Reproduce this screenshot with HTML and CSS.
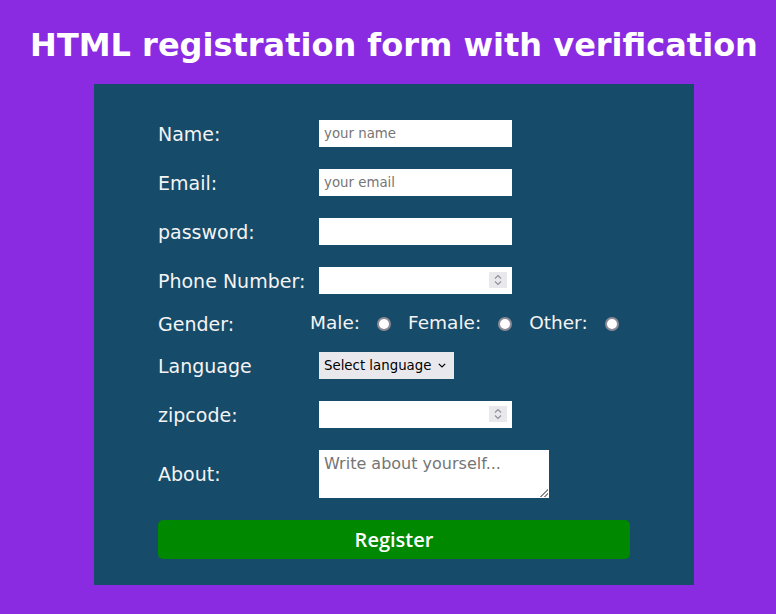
FILE: index.html
```html
<!DOCTYPE html>
<html lang="en">
<head>
<meta charset="utf-8">
<title>HTML registration form with verification</title>
<link rel="stylesheet" href="styles.css">
</head>
<body>
<div class="page">
  <h1 class="title">HTML registration form with verification</h1>
  <form class="panel" onsubmit="return false">
    <div class="row">
      <label class="label" for="name">Name:</label>
      <input class="field" id="name" type="text" placeholder="your name">
    </div>
    <div class="row">
      <label class="label" for="email">Email:</label>
      <input class="field" id="email" type="text" placeholder="your email">
    </div>
    <div class="row">
      <label class="label" for="pw">password:</label>
      <input class="field" id="pw" type="password">
    </div>
    <div class="row">
      <label class="label" for="phone">Phone Number:</label>
      <div class="numbox">
        <input class="numfield" id="phone" type="text" inputmode="numeric">
        <span class="spin"><svg width="10" height="14" viewBox="0 0 10 14"><path d="M2 5.5 L5 2.5 L8 5.5 M2 8.5 L5 11.5 L8 8.5" fill="none" stroke="#8e8e98" stroke-width="1.1"/></svg></span>
      </div>
    </div>
    <div class="row gender">
      <span class="label glabel">Gender:</span>
      <label class="opt">Male:<input class="radio" type="radio" name="g"></label>
      <label class="opt">Female:<input class="radio" type="radio" name="g"></label>
      <label class="opt">Other:<input class="radio" type="radio" name="g"></label>
    </div>
    <div class="row lang">
      <label class="label" for="lang">Language</label>
      <select class="select" id="lang">
        <option>Select language</option>
        <option>English</option>
        <option>Hindi</option>
      </select>
    </div>
    <div class="row">
      <label class="label" for="zip">zipcode:</label>
      <div class="numbox">
        <input class="numfield" id="zip" type="text" inputmode="numeric">
        <span class="spin"><svg width="10" height="14" viewBox="0 0 10 14"><path d="M2 5.5 L5 2.5 L8 5.5 M2 8.5 L5 11.5 L8 8.5" fill="none" stroke="#8e8e98" stroke-width="1.1"/></svg></span>
      </div>
    </div>
    <div class="row">
      <label class="label" for="about">About:</label>
      <textarea class="about" id="about" placeholder="Write about yourself..."></textarea>
    </div>
    <button class="register" type="submit">Register</button>
  </form>
</div>
</body>
</html>
```

FILE: styles.css
```css
html, body {
  margin: 0;
  padding: 0;
}
body {
  background: #8a2be2;
  font-family: "DejaVu Sans", sans-serif;
  height: 614px;
  overflow: hidden;
}
.page {
  padding-left: 12px;
  display: flex;
  flex-direction: column;
  align-items: center;
}
.title {
  margin: 27px 0 20px;
  font-size: 32px;
  font-weight: bold;
  line-height: 37px;
  color: #ffffff;
  text-align: center;
  white-space: nowrap;
}
.panel {
  box-sizing: border-box;
  width: 600px;
  height: 501px;
  background: #174b6a;
  padding: 36px 64px 26px;
  display: flex;
  flex-direction: column;
}
.row {
  display: flex;
  align-items: center;
  margin-bottom: 22px;
}
.label {
  width: 161px;
  flex: none;
  color: #f4f4f4;
  font-size: 19px;
  line-height: 22px;
}
.field, .numbox {
  box-sizing: border-box;
  width: 193px;
  height: 27px;
  border: none;
  background: #fff;
  padding: 0 5px;
  margin: 0;
  font-family: "DejaVu Sans", sans-serif;
  font-size: 13.33px;
  color: #000;
  outline: none;
}
.field::placeholder {
  color: #757575;
}
.numbox {
  display: flex;
  align-items: center;
}
.numfield {
  flex: 1;
  min-width: 0;
  border: none;
  outline: none;
  padding: 0;
  height: 27px;
  font-family: "DejaVu Sans", sans-serif;
  font-size: 13.33px;
  background: transparent;
}
.spin {
  width: 18px;
  height: 16px;
  background: #e9e9ed;
  display: flex;
  align-items: center;
  justify-content: center;
  margin-top: -2px;
}
.gender {
  margin-top: -4px;
  margin-bottom: 19px;
  height: 21px;
}
.glabel {
  width: 152px;
  margin-top: 3px;
}
.opt {
  display: flex;
  align-items: center;
  color: #f4f4f4;
  font-size: 18.5px;
  line-height: 21px;
}
.radio {
  appearance: none;
  -webkit-appearance: none;
  box-sizing: border-box;
  width: 14px;
  height: 14px;
  margin: 2px 17px 0 17px;
  border: 2px solid #8b8b97;
  border-radius: 50%;
  background: #fff;
}
.select {
  appearance: none;
  -webkit-appearance: none;
  box-sizing: border-box;
  width: 135px;
  height: 27px;
  border: none;
  margin: 0;
  padding: 0 0 0 5px;
  font-family: "DejaVu Sans", sans-serif;
  font-size: 13.33px;
  color: #000;
  background: #e9e9ed url("data:image/svg+xml;utf8,<svg xmlns='http://www.w3.org/2000/svg' width='8' height='5' viewBox='0 0 8 5'><path d='M0.8 0.8 L4 4 L7.2 0.8' fill='none' stroke='black' stroke-width='1.2'/></svg>") no-repeat right 8px center;
  outline: none;
}
.about {
  box-sizing: border-box;
  width: 230px;
  height: 48px;
  border: none;
  margin: 0;
  padding: 4px 5px;
  resize: none;
  outline: none;
  font-family: "DejaVu Sans", sans-serif;
  font-size: 16px;
  line-height: 19px;
  background:
    linear-gradient(to bottom right, #fff 52%, transparent 52%) no-repeat right 1px bottom 1px / 10px 10px,
    repeating-linear-gradient(135deg, #8a8a8a 0 1px, #fff 1px 2.8px) no-repeat right 1px bottom 1px / 10px 10px,
    #fff;
}
.about::placeholder {
  color: #757575;
}
.register {
  width: 472px;
  height: 39px;
  margin: 0;
  border: none;
  border-radius: 5px;
  background: #008800;
  color: #fff;
  font-family: "Open Sans", "Noto Sans", sans-serif;
  font-weight: 600;
  font-size: 20px;
  padding: 0;
  cursor: pointer;
}
```
